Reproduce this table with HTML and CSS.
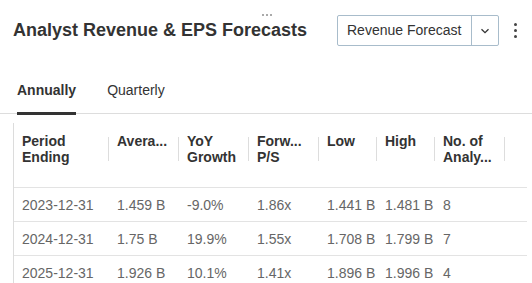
FILE: index.html
```html
<!DOCTYPE html>
<html>
<head>
<meta charset="utf-8">
<link rel="stylesheet" href="styles.css">
</head>
<body>
<div class="widget">
  <div class="handle"><i></i><i></i><i></i></div>
  <div class="top">
    <h1 class="title">Analyst Revenue &amp; EPS Forecasts</h1>
    <div class="select">
      <span class="select-label">Revenue Forecast</span>
      <span class="select-arrow">
        <svg width="10" height="6" viewBox="0 0 10 6"><path d="M1.5 1.2 L5 4.6 L8.5 1.2" fill="none" stroke="#333" stroke-width="1.3"/></svg>
      </span>
    </div>
    <div class="kebab"><i></i><i></i><i></i></div>
  </div>
  <div class="tabs">
    <div class="tab active">Annually</div>
    <div class="tab">Quarterly</div>
  </div>
  <div class="table">
    <div class="row head">
      <div class="cell c1"><span>Period<br>Ending</span></div>
      <div class="cell c2"><span>Avera...</span></div>
      <div class="cell c3"><span>YoY<br>Growth</span></div>
      <div class="cell c4"><span>Forw...<br>P/S</span></div>
      <div class="cell c5"><span>Low</span></div>
      <div class="cell c6"><span>High</span></div>
      <div class="cell c7"><span>No. of<br>Analy...</span></div>
    </div>
    <div class="row">
      <div class="cell c1">2023-12-31</div>
      <div class="cell c2">1.459 B</div>
      <div class="cell c3">-9.0%</div>
      <div class="cell c4">1.86x</div>
      <div class="cell c5">1.441 B</div>
      <div class="cell c6">1.481 B</div>
      <div class="cell c7">8</div>
    </div>
    <div class="row">
      <div class="cell c1">2024-12-31</div>
      <div class="cell c2">1.75 B</div>
      <div class="cell c3">19.9%</div>
      <div class="cell c4">1.55x</div>
      <div class="cell c5">1.708 B</div>
      <div class="cell c6">1.799 B</div>
      <div class="cell c7">7</div>
    </div>
    <div class="row">
      <div class="cell c1">2025-12-31</div>
      <div class="cell c2">1.926 B</div>
      <div class="cell c3">10.1%</div>
      <div class="cell c4">1.41x</div>
      <div class="cell c5">1.896 B</div>
      <div class="cell c6">1.996 B</div>
      <div class="cell c7">4</div>
    </div>
  </div>
</div>
</body>
</html>
```
FILE: styles.css
```css
html, body {
  margin: 0;
  padding: 0;
  background: #fff;
}
body {
  font-family: "Liberation Sans", Arial, sans-serif;
  color: #333;
  width: 532px;
  height: 283px;
  overflow: hidden;
}
.widget {
  position: relative;
}
.handle {
  position: absolute;
  left: 262px;
  top: 14px;
  display: flex;
  gap: 2px;
}
.handle i {
  width: 2px;
  height: 2px;
  background: #aaa;
}
.top {
  display: flex;
  align-items: center;
  height: 31px;
  padding: 15px 0 0 13px;
}
.title {
  margin: 0;
  font-size: 18px;
  font-weight: bold;
  color: #333;
  flex: 1;
}
.select {
  display: flex;
  height: 29px;
  width: 160px;
  border: 1px solid #a8bccb;
  border-radius: 2px;
  box-sizing: content-box;
}
.select-label {
  width: 124px;
  padding-left: 9px;
  font-size: 14px;
  line-height: 29px;
  color: #333;
  border-right: 1px solid #a8bccb;
}
.select-arrow {
  flex: 1;
  display: flex;
  align-items: center;
  justify-content: center;
}
.kebab {
  width: 33px;
  display: flex;
  flex-direction: column;
  align-items: center;
  gap: 3px;
}
.kebab i {
  width: 3px;
  height: 3px;
  border-radius: 50%;
  background: #444;
}
.tabs {
  display: flex;
  margin-top: 34px;
  height: 33px;
  border-bottom: 1px solid #ddd;
  padding-left: 17px;
  gap: 31px;
}
.tab {
  font-size: 14px;
  line-height: 16px;
  padding-top: 2px;
  color: #333;
}
.tab.active {
  font-weight: bold;
  border-bottom: 3px solid #333;
  margin-bottom: -1px;
  height: 30px;
}
.table {
  margin: 9px 5px 0 13px;
  border-left: 1px solid #dcdcdc;
}
.row {
  display: flex;
  height: 33px;
  border-bottom: 1px solid #e3e3e3;
  font-size: 14px;
  color: #666;
  align-items: center;
}
.row.head {
  height: 64px;
  align-items: flex-start;
  color: #333;
  font-weight: bold;
  line-height: 16px;
}
.cell {
  box-sizing: border-box;
  padding-left: 8px;
  white-space: nowrap;
}
.head .cell {
  padding-top: 10px;
  position: relative;
  height: 64px;
}
.head .cell::after {
  content: "";
  position: absolute;
  right: 0;
  top: 14px;
  height: 24px;
  border-right: 1px solid #ddd;
}
.c1 { width: 95px; }
.c2 { width: 70px; }
.c3 { width: 70px; }
.c4 { width: 70px; }
.c5 { width: 58px; }
.c6 { width: 58px; }
.c7 { width: 70px; }
.row:not(.head) .c1 { padding-top: 1px; }
```
